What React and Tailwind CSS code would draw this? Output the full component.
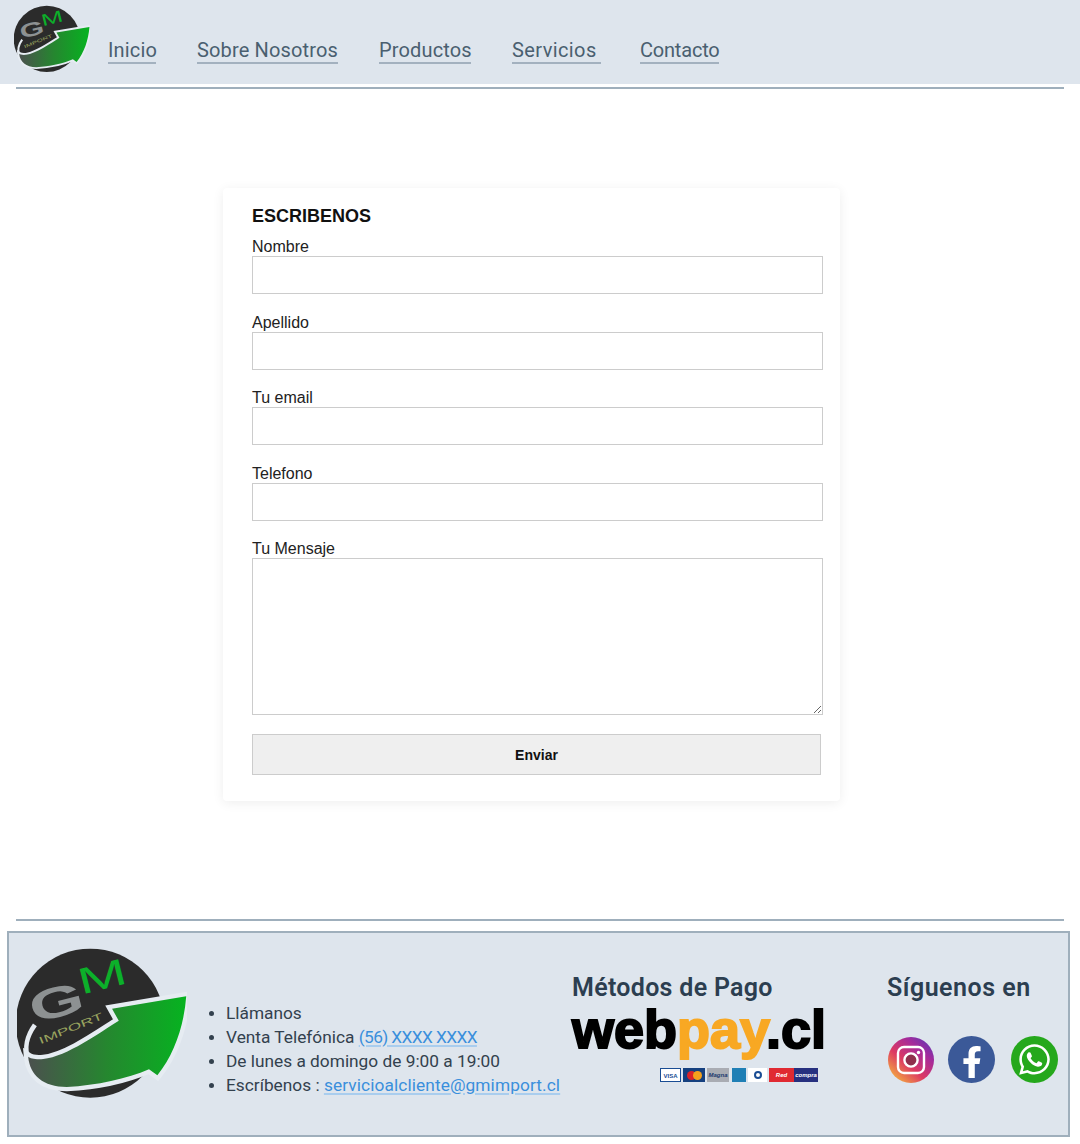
import React from 'react';
import { FaFacebookF, FaWhatsapp } from 'react-icons/fa';

const navLinks = [
  { label: 'Inicio', className: 'w-[48px]' },
  { label: 'Sobre Nosotros', className: 'w-[141px]' },
  { label: 'Productos', className: 'w-[92px]' },
  { label: 'Servicios', className: 'w-[89px] tracking-[0.4px]' },
  { label: 'Contacto', className: '-ml-[2px] w-[79px] tracking-[-0.2px]' },
];

const fields = ['Nombre', 'Apellido', 'Tu email', 'Telefono'];

const din = "font-['Roboto',sans-serif]";

const Logo = ({ id, className }) => (
  <svg viewBox="52 98 506 456" className={className}>
    <defs>
      <linearGradient id={id} x1="85" x2="556" y1="0" y2="0" gradientUnits="userSpaceOnUse">
        <stop offset="0" stopColor="#4b504e" />
        <stop offset="0.5" stopColor="#25872f" />
        <stop offset="1" stopColor="#06b320" />
      </linearGradient>
    </defs>
    <circle cx="270" cy="325" r="222" fill="#2b2b2b" />
    <path d="M105 330 C82 362 72 400 86 432" fill="none" stroke="#e6ecf2" strokeWidth="14" />
    <path
      d="M556 245 L335 282 L355 318 C300 352 200 425 130 432 C105 434 92 430 85 425 C90 480 130 515 200 515 C290 510 380 490 445 462 L470 480 C520 420 550 330 556 245 Z"
      fill={`url(#${id})`}
      stroke="#e6ecf2"
      strokeWidth="26"
      strokeLinejoin="miter"
      paintOrder="stroke"
    />
    <text
      transform="translate(100 325) rotate(-14) scale(1.65 1)"
      fontFamily="Liberation Sans, sans-serif"
      fontWeight="700"
      fontSize="128"
      fill="#8d9192"
    >
      G
    </text>
    <text
      transform="translate(243 240) rotate(-14) scale(1.6 1)"
      fontFamily="Liberation Sans, sans-serif"
      fontSize="110"
      fill="#0cb02a"
    >
      M
    </text>
    <text
      transform="translate(122 388) rotate(-22) scale(1.75 1)"
      fontFamily="Liberation Sans, sans-serif"
      fontSize="30"
      fill="#9aa45f"
    >
      IMPORT
    </text>
  </svg>
);

const Instagram = () => (
  <svg viewBox="0 0 46 46" className="ml-[1px] h-[46px] w-[46px]">
    <defs>
      <linearGradient id="ig" x1="0.1" y1="0.95" x2="0.9" y2="0.05">
        <stop offset="0" stopColor="#f6b73c" />
        <stop offset="0.4" stopColor="#dd3a62" />
        <stop offset="0.75" stopColor="#a42a9c" />
        <stop offset="1" stopColor="#5f38b4" />
      </linearGradient>
    </defs>
    <circle cx="23" cy="23" r="23" fill="url(#ig)" />
    <rect x="10" y="10" width="26" height="26" rx="6" fill="none" stroke="#fff" strokeWidth="2.4" />
    <circle cx="23" cy="23" r="6.6" fill="#8f2f4d" stroke="#fff" strokeWidth="2.4" />
    <circle cx="30.5" cy="15.5" r="1.7" fill="#fff" />
  </svg>
);

const PaymentCards = () => (
  <div className="mt-[15px] ml-[88px] flex h-[14px] items-stretch font-['Liberation_Sans',sans-serif] text-[6px] font-bold leading-[14px]">
    <span className="w-[21px] border border-[#1a4d94] bg-white text-center text-[#1a4d94]">VISA</span>
    <span className="ml-[2px] flex w-[22px] items-center justify-center bg-[#15407f]">
      <span className="h-[9px] w-[9px] rounded-full bg-[#d9222a]" />
      <span className="-ml-[3px] h-[9px] w-[9px] rounded-full bg-[#f4a01d]" />
    </span>
    <span className="ml-[2px] w-[22px] bg-[#a9acb3] text-center italic text-[#1d3a6e]">Magna</span>
    <span className="ml-[3px] w-[14px] bg-[#1f7fb5]" />
    <span className="ml-[2px] flex w-[19px] items-center justify-center bg-white">
      <span className="h-[8px] w-[8px] rounded-full border-2 border-[#1a4d94]" />
    </span>
    <span className="ml-[2px] w-[25px] bg-[#e02a32] text-center italic text-white">Red</span>
    <span className="w-[24px] bg-[#27307f] text-center italic text-white">compra</span>
  </div>
);

const App = () => {
  return (
    <div className="flex h-[1144px] w-[1080px] flex-col bg-white font-['Liberation_Sans',sans-serif]">
      <header className="flex h-[84px] bg-[#dee5ed]">
        <Logo id="logo-top" className="mt-[5px] ml-[14px] h-[68px] w-[76px]" />
        <nav className={`mt-[36px] ml-[18px] flex h-[28px] gap-[41px] ${din} text-[20px] tracking-[0.15px] text-[#4a5f70]`}>
          {navLinks.map((link) => (
            <a key={link.label} className={`${link.className} whitespace-nowrap border-b-2 border-[#a3b1bf] leading-[28px]`}>
              {link.label}
            </a>
          ))}
        </nav>
      </header>
      <hr className="mx-4 mt-[3px] border-0 border-t-2 border-[#9fafbc]" />

      <main className="mt-[99px] ml-[223px] h-[613px] w-[617px] rounded bg-white pt-[15px] pl-[29px] shadow-[0_2px_12px_rgba(0,0,0,0.07)]">
        <h2 className="mb-[10px] h-[25px] pt-[1px] text-[18px] font-bold leading-[24px] text-[#111]">ESCRIBENOS</h2>
        {fields.map((name) => (
          <div key={name} className="mb-[19.5px]">
            <label className="block h-[18px] text-[16px] leading-[18px] text-[#222]">{name}</label>
            <input type="text" className="block h-[38px] w-[571px] border border-[#ccc] bg-white" />
          </div>
        ))}
        <label className="block h-[18px] text-[16px] leading-[18px] text-[#222]">Tu Mensaje</label>
        <textarea className="block h-[157px] w-[571px] border border-[#ccc] bg-white" />
        <button type="button" className="mt-[19px] block h-[41px] w-[569px] border border-[#ccc] bg-[#efefef] pt-[2px] text-[14px] font-bold text-[#111]">
          Enviar
        </button>
      </main>

      <hr className="mx-4 mt-[118px] border-0 border-t-2 border-[#9fafbc]" />

      <footer className={`mt-[10px] ml-[7px] flex h-[206px] w-[1063px] border-2 border-[#9fafbc] bg-[#dee5ed] ${din}`}>
        <Logo id="logo-bottom" className="mt-[14px] ml-[8px] h-[153px] w-[170px]" />
        <ul className="mt-[68px] ml-[39px] w-[346px] list-disc pl-0 text-[17.3px] leading-[24px] text-[#33414e] marker:text-[16px] marker:text-[#33414e]">
          <li>Llámanos</li>
          <li>
            Venta Telefónica{' '}
            <a className="tracking-[-0.6px] text-[#3a8fdc] underline decoration-[#a9cdee] decoration-2 underline-offset-2">(56) XXXX XXXX</a>
          </li>
          <li>De lunes a domingo de 9:00 a 19:00</li>
          <li>
            Escríbenos :{' '}
            <a className="tracking-[0.1px] text-[#3a8fdc] underline decoration-[#a9cdee] decoration-2 underline-offset-2">servicioalcliente@gmimport.cl</a>
          </li>
        </ul>
        <div className="mt-[40px] w-[315px]">
          <h3 className="text-[25px] font-semibold leading-[30px] tracking-[0.3px] text-[#2c3e50]">Métodos de Pago</h3>
          <div className="mt-[2px] h-[48px] whitespace-nowrap font-['Liberation_Sans',sans-serif] text-[54px] font-bold leading-[48px] text-black [-webkit-text-stroke:2px_currentColor]">
            web<span className="text-[#f8a823]">pay</span>.cl
          </div>
          <PaymentCards />
        </div>
        <div className="mt-[40px]">
          <h3 className="text-[25px] font-semibold leading-[30px] tracking-[0.5px] text-[#2c3e50]">Síguenos en</h3>
          <div className="mt-[33px] flex items-center">
            <Instagram />
            <span className="ml-[14px] flex h-[47px] w-[47px] items-center justify-center overflow-hidden rounded-full bg-[#3b5998] text-white">
              <FaFacebookF className="mt-[4px] h-[32px] w-[32px]" />
            </span>
            <span className="ml-[16px] flex h-[47px] w-[47px] items-center justify-center rounded-full bg-[#25a81c] text-white">
              <FaWhatsapp className="h-[35px] w-[35px]" />
            </span>
          </div>
        </div>
      </footer>
    </div>
  );
};

export default App;
